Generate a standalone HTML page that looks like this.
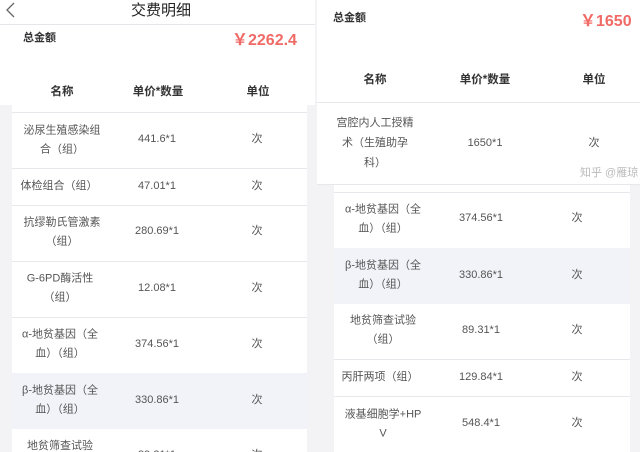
<!DOCTYPE html><html style="overflow:hidden;width:640px;height:452px"><head><meta charset="utf-8"><style>
*{margin:0;padding:0;box-sizing:border-box}
html,body{overflow:hidden}
body{width:640px;height:452px;background:#f3f3f5;font-family:"Liberation Sans","Noto Sans CJK SC",sans-serif;position:relative;color:#555}
.a{position:absolute;white-space:nowrap}
.c{position:absolute;text-align:center;font-size:11px;line-height:18.5px;color:#555;transform:translate(-50%,-50%)}
.h{font-weight:bold;color:#333;font-size:11.5px}
.sep{position:absolute;height:1px;background:#e8e8ec}
.red{color:#f06a66;font-weight:bold}
</style></head><body>
<div class="a" style="left:0;top:0;width:315px;height:105px;background:#fff"></div>
<div class="a" style="left:12px;top:105px;width:295px;height:347px;background:#fff"></div>
<div class="a" style="left:12px;top:373px;width:295px;height:56px;background:#f1f3f8"></div>
<div class="sep" style="left:0;top:24px;width:315px;background:#e4e6ea"></div>
<svg class="a" style="left:4px;top:2px" width="12" height="16"><path d="M10 1 L3 8 L10 15" stroke="#666" stroke-width="1.3" fill="none"/></svg>
<div class="a" style="left:131px;top:-1px;font-size:15px;color:#222">交费明细</div>
<div class="a" style="left:23px;top:29px;font-size:11px;font-weight:bold;color:#333">总金额</div>
<div class="a red" style="left:232px;top:26px;font-size:16px">￥2262.4</div>
<div class="c h" style="left:62px;top:92px">名称</div>
<div class="c h" style="left:158px;top:92px">单价*数量</div>
<div class="c h" style="left:258px;top:92px">单位</div>
<div class="sep" style="left:12px;top:112px;width:295px"></div>
<div class="c" style="left:62px;top:140px">泌尿生殖感染组<br>合（组）</div><div class="c" style="left:157px;top:139px">441.6*1</div><div class="c" style="left:257px;top:139px">次</div>
<div class="sep" style="left:12px;top:168px;width:295px"></div>
<div class="c" style="left:59px;top:186px">体检组合（组）</div><div class="c" style="left:157px;top:186px">47.01*1</div><div class="c" style="left:257px;top:186px">次</div>
<div class="sep" style="left:12px;top:205px;width:295px"></div>
<div class="c" style="left:62px;top:232px">抗缪勒氏管激素<br>（组）</div><div class="c" style="left:157px;top:231px">280.69*1</div><div class="c" style="left:257px;top:231px">次</div>
<div class="sep" style="left:12px;top:261px;width:295px"></div>
<div class="c" style="left:60px;top:288px">G-6PD酶活性<br>（组）</div><div class="c" style="left:157px;top:288px">12.08*1</div><div class="c" style="left:257px;top:288px">次</div>
<div class="sep" style="left:12px;top:317px;width:295px"></div>
<div class="c" style="left:60px;top:344px">α-地贫基因（全<br>血）（组）</div><div class="c" style="left:157px;top:344px">374.56*1</div><div class="c" style="left:257px;top:344px">次</div>
<div class="c" style="left:60px;top:400px">β-地贫基因（全<br>血）（组）</div><div class="c" style="left:157px;top:400px">330.86*1</div><div class="c" style="left:257px;top:400px">次</div>
<div class="c" style="left:60px;top:446px">地贫筛查试验</div><div class="c" style="left:157px;top:455px">89.31*1</div><div class="c" style="left:257px;top:455px">次</div>
<div class="a" style="left:317px;top:0;width:323px;height:185px;background:#fff"></div>
<div class="a" style="left:334px;top:185px;width:296px;height:267px;background:#fff"></div>
<div class="a" style="left:334px;top:248px;width:296px;height:56px;background:#f1f3f8"></div>
<div class="a" style="left:333px;top:9px;font-size:11px;font-weight:bold;color:#333">总金额</div>
<div class="a red" style="left:580px;top:7px;font-size:16px">￥1650</div>
<div class="c h" style="left:375px;top:80px">名称</div>
<div class="c h" style="left:485px;top:80px">单价*数量</div>
<div class="c h" style="left:594px;top:80px">单位</div>
<div class="sep" style="left:317px;top:102px;width:323px"></div>
<div class="c" style="left:375px;top:143px;line-height:20px">宫腔内人工授精<br>术（生殖助孕<br>科）</div><div class="c" style="left:485px;top:143px">1650*1</div><div class="c" style="left:594px;top:143px">次</div>
<div class="a" style="left:580px;top:164px;font-size:11px;color:#bbb">知乎 @雁琼</div>
<div class="sep" style="left:317px;top:184px;width:323px"></div>
<div class="sep" style="left:334px;top:192px;width:296px"></div>
<div class="c" style="left:383px;top:219px">α-地贫基因（全<br>血）（组）</div><div class="c" style="left:481px;top:218px">374.56*1</div><div class="c" style="left:577px;top:218px">次</div>
<div class="c" style="left:383px;top:275px">β-地贫基因（全<br>血）（组）</div><div class="c" style="left:481px;top:275px">330.86*1</div><div class="c" style="left:577px;top:275px">次</div>
<div class="c" style="left:383px;top:330px">地贫筛查试验<br>（组）</div><div class="c" style="left:481px;top:330px">89.31*1</div><div class="c" style="left:577px;top:330px">次</div>
<div class="sep" style="left:334px;top:359px;width:296px"></div>
<div class="c" style="left:380px;top:377px">丙肝两项（组）</div><div class="c" style="left:481px;top:377px">129.84*1</div><div class="c" style="left:577px;top:377px">次</div>
<div class="sep" style="left:334px;top:396px;width:296px"></div>
<div class="c" style="left:383px;top:424px">液基细胞学+HP<br>V</div><div class="c" style="left:481px;top:423px">548.4*1</div><div class="c" style="left:577px;top:423px">次</div>
</body></html>
